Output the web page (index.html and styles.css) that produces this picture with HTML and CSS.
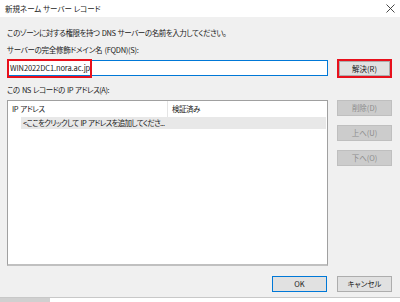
FILE: index.html
```html
<!DOCTYPE html>
<html lang="ja">
<head>
    <meta charset="UTF-8">
    <title>新規ネーム サーバー レコード</title>
    <link rel="stylesheet" href="styles.css">
</head>
<body>
    <div class="dialog">
        <div class="titlebar">
            <span class="title">新規ネーム サーバー レコード</span>
            <svg class="close" width="9" height="9" viewBox="0 0 9 9">
                <path d="M0.5 0.5 L8.5 8.5 M8.5 0.5 L0.5 8.5" stroke="#333" stroke-width="0.9" fill="none"/>
            </svg>
        </div>

        <div class="content">
            <p class="intro">このゾーンに対する権限を持つ DNS サーバーの名前を入力してください。</p>
            <p class="label">サーバーの完全修飾ドメイン名 (FQDN)(S):</p>

            <div class="fqdn-row">
                <div class="fqdn-input">
                    <span class="value">WIN2022DC1.nora.ac.jp</span>
                    <span class="mark mark-input"></span>
                </div>
                <div class="mark-wrap">
                    <button class="btn">解決(R)</button>
                </div>
            </div>

            <p class="label label-list">この NS レコードの IP アドレス(A):</p>

            <div class="list-row">
                <div class="listbox">
                    <div class="list-head">
                        <span class="col col-ip">IP アドレス</span>
                        <span class="col col-check">検証済み</span>
                    </div>
                    <div class="list-item">&lt;ここをクリックして IP アドレスを追加してくださ...</div>
                </div>
                <div class="side-buttons">
                    <button class="btn" disabled>削除(D)</button>
                    <button class="btn" disabled>上へ(U)</button>
                    <button class="btn" disabled>下へ(O)</button>
                </div>
            </div>

            <div class="footer">
                <button class="btn btn-default">OK</button>
                <button class="btn">キャンセル</button>
            </div>
        </div>

        <div class="taskstrip">
            <span class="strip-left"></span>
        </div>
    </div>
</body>
</html>
```

FILE: styles.css
```css
/* Dialog base */
body {
    margin: 0;
    font-family: "Noto Sans CJK JP", "Noto Sans", sans-serif;
    font-feature-settings: "palt";
    font-size: 7.5px;
    color: #1a1a1a;
}

.dialog {
    width: 400px;
    height: 302px;
    background: #f0f0f0;
    display: flex;
    flex-direction: column;
    overflow: hidden;
}

p {
    margin: 0;
}

/* Title bar */
.titlebar {
    height: 17px;
    flex: none;
    background: #ffffff;
    display: flex;
    align-items: center;
    justify-content: space-between;
    padding: 0 5px 0 5px;
}

.title {
    line-height: 10px;
}

/* Content */
.content {
    flex: 1;
    padding: 0 8px 0 7px;
    display: flex;
    flex-direction: column;
    letter-spacing: -0.45px;
    word-spacing: 1px;
}

.intro,
.label {
    line-height: 10px;
}

.intro {
    margin-top: 11px;
}

.label {
    margin-top: 7px;
    letter-spacing: -0.3px;
}

.label-list {
    margin-top: 7px;
    letter-spacing: -0.5px;
}

/* FQDN row */
.fqdn-row {
    margin-top: 4px;
    height: 19px;
    display: flex;
    gap: 9px;
    align-items: flex-start;
}

.fqdn-input {
    position: relative;
    width: 321px;
    height: 16px;
    margin-top: 1px;
    box-sizing: border-box;
    border: 1px solid #0078d7;
    background: #ffffff;
    display: flex;
    align-items: center;
    padding-left: 2px;
}

.value {
    line-height: 10px;
    letter-spacing: -0.1px;
}

/* red annotation boxes */
.mark {
    position: absolute;
    border: 2px solid #e8101c;
    pointer-events: none;
}

.mark-input {
    left: -1px;
    top: -2px;
    width: 85px;
    height: 19px;
    box-sizing: border-box;
}

.mark-wrap {
    width: 55px;
    height: 19px;
    box-sizing: border-box;
    border: 2px solid #e8101c;
    padding: 0;
    display: flex;
}

.mark-wrap .btn {
    height: 15px;
    flex: 1;
    border-color: #adadad;
}

/* Buttons */
.btn {
    font: inherit;
    width: 55px;
    height: 16px;
    padding: 0;
    box-sizing: border-box;
    border: 1px solid #adadad;
    background: #e1e1e1;
    color: #1a1a1a;
    line-height: 10px;
}

.btn:disabled {
    background: #cccccc;
    border-color: #bfbfbf;
    color: #8c8c8c;
}

.btn-default {
    border: 1px solid #0078d7;
}

/* List area */
.list-row {
    margin-top: 5px;
    display: flex;
    gap: 9px;
    align-items: flex-start;
}

.listbox {
    width: 321px;
    height: 166px;
    box-sizing: border-box;
    border: 1px solid #a0a0a0;
    border-bottom: 2px solid #c0c0c0;
    background: #ffffff;
}

.list-head {
    height: 16px;
    display: flex;
    align-items: center;
}

.col {
    line-height: 10px;
}

.col-ip {
    width: 155px;
    padding-left: 4px;
    border-right: 1px solid #e5e5e5;
    height: 16px;
    display: flex;
    align-items: center;
}

.col-check {
    padding-left: 4px;
}

.list-item {
    margin-left: 13px;
    margin-right: 1px;
    height: 12px;
    line-height: 12px;
    background: #e8e8e8;
    padding-left: 2px;
    letter-spacing: -0.7px;
}

.side-buttons {
    display: flex;
    flex-direction: column;
    gap: 9px;
}

/* Footer */
.footer {
    margin-top: 10px;
    display: flex;
    justify-content: flex-end;
    gap: 10px;
}

/* Window behind, peeking at the bottom */
.taskstrip {
    height: 4px;
    flex: none;
    background: #ffffff;
    border-top: 1px solid #c8c8c8;
    display: flex;
}

.strip-left {
    width: 50px;
    background: #d0d0d0;
}
```
